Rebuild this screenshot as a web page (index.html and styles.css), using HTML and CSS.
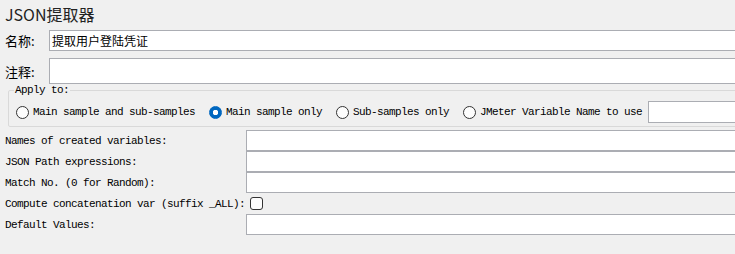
FILE: index.html
```html
<!DOCTYPE html>
<html lang="zh-CN">
<head>
    <meta charset="UTF-8">
    <title>JSON提取器</title>
    <link rel="stylesheet" href="styles.css">
</head>
<body>
    <div class="panel">
        <div class="panel-title">JSON提取器</div>

        <div class="field-row name-row">
            <label class="field-label" for="name">名称:</label>
            <input id="name" class="text-input" type="text" value="提取用户登陆凭证">
        </div>

        <div class="field-row comment-row">
            <label class="field-label" for="comment">注释:</label>
            <input id="comment" class="text-input" type="text">
        </div>

        <fieldset class="apply-box">
            <legend>Apply to:</legend>
            <div class="apply-options">
                <label class="option"><input type="radio" name="scope" class="radio"><span>Main sample and sub-samples</span></label>
                <label class="option"><input type="radio" name="scope" class="radio" checked><span>Main sample only</span></label>
                <label class="option"><input type="radio" name="scope" class="radio"><span>Sub-samples only</span></label>
                <label class="option"><input type="radio" name="scope" class="radio"><span>JMeter Variable Name to use</span></label>
                <input class="text-input var-input" type="text">
            </div>
        </fieldset>

        <div class="extractor-grid">
            <label class="grid-label">Names of created variables:</label>
            <input class="text-input grid-input" type="text">

            <label class="grid-label">JSON Path expressions:</label>
            <input class="text-input grid-input" type="text">

            <label class="grid-label">Match No. (0 for Random):</label>
            <input class="text-input grid-input" type="text">

            <label class="grid-label">Compute concatenation var (suffix _ALL):</label>
            <div class="check-cell"><input type="checkbox" class="checkbox"></div>

            <label class="grid-label">Default Values:</label>
            <input class="text-input grid-input" type="text">
        </div>
    </div>
</body>
</html>
```

FILE: styles.css
```css
html, body {
    margin: 0;
    padding: 0;
    background-color: #f0f0f0;
    overflow: hidden;
}

body {
    width: 735px;
    height: 254px;
    font-family: "Liberation Mono", "Noto Sans CJK SC", monospace;
    color: #000;
}

.panel {
    padding-left: 5px;
}

.panel-title {
    height: 30px;
    line-height: 28px;
    font-family: "Noto Sans CJK SC", sans-serif;
    font-size: 16px;
    color: #222;
}

.field-row {
    display: flex;
    align-items: center;
    margin-right: -20px;
}

.name-row {
    height: 21px;
}

.comment-row {
    height: 26px;
    margin-top: 7px;
}

.field-label {
    width: 44px;
    flex-shrink: 0;
    font-family: "Noto Sans CJK SC", sans-serif;
    font-size: 13px;
}

.text-input {
    box-sizing: border-box;
    height: 100%;
    flex: 1;
    min-width: 0;
    margin: 0;
    padding: 0 2px;
    border: 1px solid #abadb3;
    background: #fff;
    font-family: "Noto Sans CJK SC", sans-serif;
    font-size: 12px;
    color: #000;
    outline: none;
}

.apply-box {
    margin: 0 -20px 0 3px;
    padding: 0 0 3px 5px;
    border: 1px solid #d9d9d9;
    border-radius: 2px;
    min-width: 0;
}

.apply-box legend {
    padding: 0 1px;
    font-size: 11px;
    letter-spacing: -0.6px;
    line-height: 12px;
}

.apply-options {
    display: flex;
    align-items: center;
    height: 22px;
    margin-top: 5px;
    font-size: 11px;
    letter-spacing: -0.6px;
}

.option {
    display: flex;
    align-items: center;
    gap: 4px;
    margin-right: 14px;
    white-space: pre;
}

.option:first-child {
    margin-left: 2px;
}

.option:nth-child(4) {
    margin-right: 6px;
}

.radio {
    appearance: none;
    box-sizing: border-box;
    width: 13px;
    height: 13px;
    margin: 0;
    border: 1px solid #333;
    border-radius: 50%;
    background: #fdfdfd;
}

.radio:checked {
    border-color: #0067c0;
    background: radial-gradient(circle, #fff 0 2.5px, #0067c0 3px);
}

.var-input {
    height: 22px;
}

.extractor-grid {
    display: grid;
    grid-template-columns: 241px 1fr;
    grid-auto-rows: 21px;
    margin: 3px -20px 0 0;
    font-size: 11px;
    letter-spacing: -0.6px;
}

.grid-label {
    display: flex;
    align-items: center;
    white-space: pre;
}

.grid-input {
    height: 21px;
}

.check-cell {
    display: flex;
    align-items: center;
    padding-left: 4px;
}

.checkbox {
    appearance: none;
    box-sizing: border-box;
    width: 13px;
    height: 13px;
    margin: 0;
    border: 1px solid #333;
    border-radius: 3px;
    background: #fdfdfd;
}
```
